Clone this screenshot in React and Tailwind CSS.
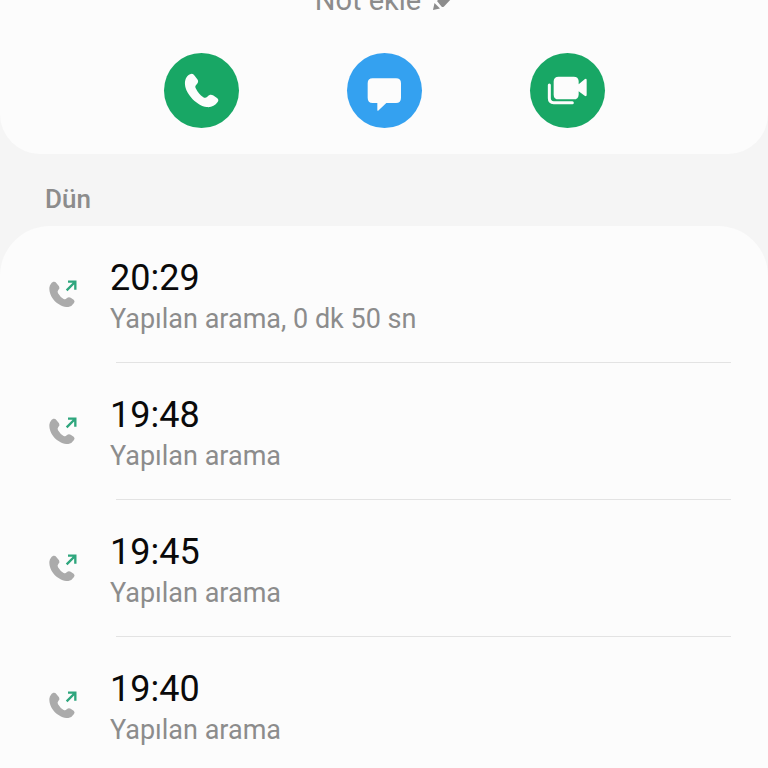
import React from "react";

const calls = [
  { id: 1, time: "20:29", detail: "Yapılan arama, 0 dk 50 sn" },
  { id: 2, time: "19:48", detail: "Yapılan arama" },
  { id: 3, time: "19:45", detail: "Yapılan arama" },
  { id: 4, time: "19:40", detail: "Yapılan arama" },
];

function PhoneIcon() {
  return (
    <svg viewBox="0 0 225 225" className="size-full" fill="currentColor" aria-hidden="true">
      <path d="M78 64C84 60 88 63 92 68L101 80C104 85 102 90 97 95C93 99 93 102 96 107C101 117 109 126 117 132C122 136 126 135 130 131C136 125 141 124 147 127L159 135C164 139 164 143 161 147C153 158 141 164 128 162C100 158 66 125 63 95C62 82 66 70 78 64Z" />
    </svg>
  );
}

function MessageIcon() {
  return (
    <svg viewBox="0 0 225 225" className="size-full" fill="currentColor" aria-hidden="true">
      <path d="M77 76H147Q162 76 162 91V134Q162 150 147 150H118L95 172Q91 176 91 170V150H77Q62 150 62 134V91Q62 76 77 76Z" />
    </svg>
  );
}

function VideoIcon() {
  return (
    <svg viewBox="0 0 225 225" className="size-full" fill="currentColor" aria-hidden="true">
      <path d="M86 71H131Q145 71 146 84V94L164 79Q170 75 170 82V125Q170 132 164 128L146 115V125Q145 139 131 139H86Q71 139 71 125V85Q71 71 86 71Z" />
      <path d="M58 96V136Q58 149 71 149H127" fill="none" stroke="currentColor" strokeWidth="9" strokeLinecap="round" />
    </svg>
  );
}

function OutgoingIcon() {
  return (
    <svg viewBox="0 0 90 90" className="size-[30px] shrink-0" aria-hidden="true">
      <path
        d="M6 14C10 8 17 7 20 10L30 22Q34 28 28 33Q24 37 27 43Q34 55 44 60Q50 62 53 58Q59 52 65 56L74 62Q79 66 75 72Q69 82 58 84C28 84 0 56 1 26Q2 18 6 14Z"
        fill="#ababab"
      />
      <path d="M53 34L78 9M57 8H79V32" fill="none" stroke="#2ea67d" strokeWidth="7" />
    </svg>
  );
}

function PencilIcon() {
  return (
    <svg viewBox="0 0 24 24" className="size-6" fill="currentColor" aria-hidden="true">
      <path d="M4 22L5.5 15L11 20.5Z" />
      <path d="M8 13L18 3L24 9L15 18.5Q13.5 19.5 12.5 18.5Z" />
    </svg>
  );
}

const actions = [
  { label: "Ara", color: "bg-[#18a765]", Icon: PhoneIcon },
  { label: "Mesaj", color: "bg-[#34a1f0]", Icon: MessageIcon },
  { label: "Görüntülü ara", color: "bg-[#18a765]", Icon: VideoIcon },
];

export default function App() {
  return (
    <div className="h-screen overflow-hidden bg-[#f5f5f5] font-['Roboto',sans-serif]">
      <header className="rounded-b-[40px] bg-[#fcfcfc] pb-[26px]">
        <button
          type="button"
          className="mx-auto -mt-4 flex h-8 items-center gap-2 text-[29px] leading-8 text-[#8c8c8c]"
        >
          Not ekle
          <PencilIcon />
        </button>
        <div className="mt-[37px] flex justify-center gap-[108px]">
          {actions.map(({ label, color, Icon }) => (
            <button
              key={label}
              type="button"
              aria-label={label}
              className={`size-[75px] rounded-full text-[#fcfcfc] ${color}`}
            >
              <Icon />
            </button>
          ))}
        </div>
      </header>

      <h2 className="px-[45px] pt-[29px] pb-[11px] text-[26px] leading-8 font-medium text-[#8c8c8c]">Dün</h2>

      <ul className="rounded-t-[50px] bg-[#fcfcfc]">
        {calls.map((call, i) => (
          <li key={call.id}>
            {i > 0 && <div className="mr-[37px] ml-[116px] h-px bg-[#e3e3e3]" />}
            <div className="flex h-[136px] items-center pl-[49px]">
              <OutgoingIcon />
              <div className="ml-[31px] pt-[3px]">
                <p className="text-[36px] leading-[46px] text-[#0a0a0a]">{call.time}</p>
                <p className="text-[27px] leading-9 text-[#8c8c8c]">{call.detail}</p>
              </div>
            </div>
          </li>
        ))}
      </ul>
    </div>
  );
}
